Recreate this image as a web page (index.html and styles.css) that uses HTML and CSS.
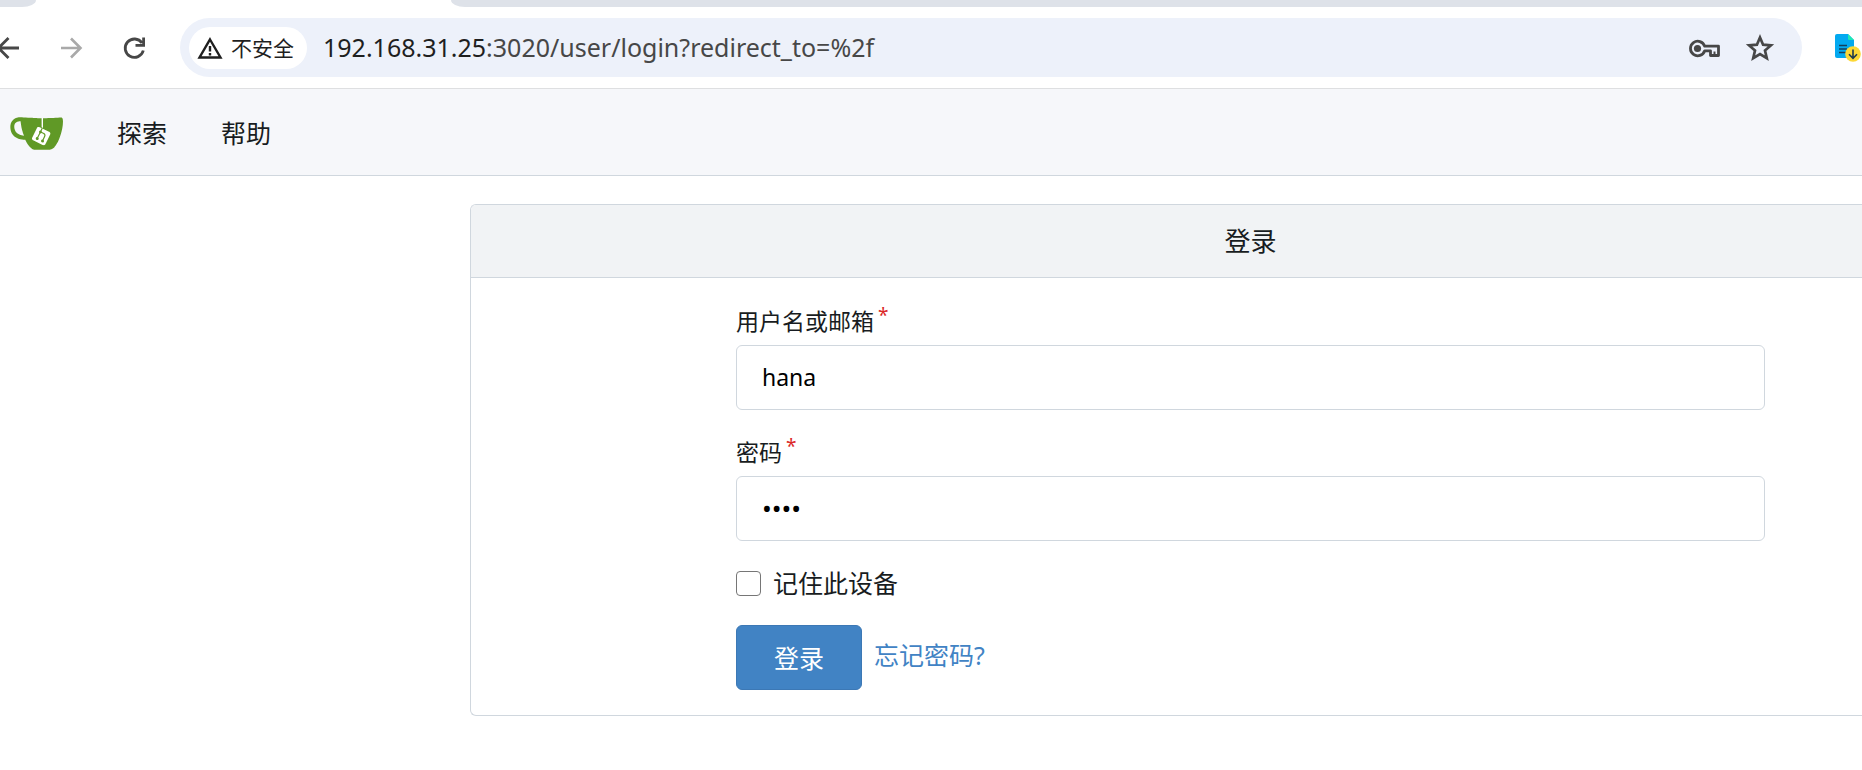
FILE: index.html
```html
<!DOCTYPE html>
<html lang="zh-CN">
<head>
<meta charset="utf-8">
<title>登录 - Gitea</title>
<link rel="stylesheet" href="styles.css">
</head>
<body>
<header class="browser">
  <div class="tabs">
    <div class="tab-prev"></div>
    <div class="tab-active"></div>
    <div class="tab-rest"></div>
  </div>
  <div class="toolbar">
    <button class="tool" type="button" aria-label="后退">
      <svg width="36" height="36" viewBox="0 0 36 36" fill="none" stroke="#474747" stroke-width="2.800"><path d="M29 18H9M18.500 8L8.500 18L18.500 28"/></svg>
    </button>
    <button class="tool" type="button" aria-label="前进">
      <svg width="36" height="36" viewBox="0 0 36 36" fill="none" stroke="#a9a9a9" stroke-width="2.600"><path d="M8 18H27M18 8.500L27.500 18L18 27.500"/></svg>
    </button>
    <button class="tool" type="button" aria-label="刷新">
      <svg width="36" height="36" viewBox="0 0 36 36" fill="none" stroke="#474747" stroke-width="2.800"><path d="M26 13A9.200 9.200 0 1 0 27.300 20.500M27.600 7.500V15.400H19.500"/></svg>
    </button>
    <div class="address">
      <button class="security" type="button">
        <svg width="26" height="24" viewBox="0 0 26 24"><path d="M13 3.500L23.500 21.500H2.500Z" fill="none" stroke="#1f1f1f" stroke-width="2.400"/><path d="M11.800 10h2.400v5.600h-2.400zM11.800 17h2.400v2.400h-2.400z" fill="#1f1f1f"/></svg>
        <span>不安全</span>
      </button>
      <div class="url"><span class="host">192.168.31.25</span>:3020/user/login?redirect_to=%2f</div>
      <button class="tool" type="button" aria-label="密码">
        <svg width="36" height="36" viewBox="0 0 36 36" fill="none" stroke="#474747"><path d="M18.700 16.200A7.300 7.300 0 1 0 18.700 20.800H24.500V25.500H32.500V16.200Z" stroke-width="2.800" stroke-linejoin="round"/><circle cx="11.500" cy="18.500" r="3.600" fill="#474747" stroke="none"/><path d="M28.500 21.500V25.500" stroke-width="2"/></svg>
      </button>
      <button class="tool" type="button" aria-label="收藏">
        <svg width="36" height="36" viewBox="0 0 36 36" fill="none" stroke="#474747" stroke-width="2.700"><path d="M18 7.500L21.100 14.700L28.900 15.400L23 20.500L24.800 28.200L18 24.100L11.200 28.200L13 20.500L7.100 15.400L14.900 14.700Z"/></svg>
      </button>
    </div>
    <button class="extension" type="button" aria-label="扩展程序">
      <svg width="28" height="32" viewBox="0 0 28 32"><path d="M3 2H14L20 8V24a2 2 0 0 1-2 2H3a2 2 0 0 1-2-2V4a2 2 0 0 1 2-2Z" fill="#03a9f0"/><path d="M14 2L20 8H15a1 1 0 0 1-1-1Z" fill="#1de9b6"/><path d="M5 13.500H13M5 17H13M5 20.500H13" stroke="#13405c" stroke-width="1.500"/><circle cx="19" cy="22" r="7.800" fill="#fdd835"/><path d="M19 17.500V26M15 22.300L19 26.300L23 22.300" fill="none" stroke="#1f3a4d" stroke-width="1.600"/></svg>
    </button>
  </div>
</header>

<nav class="navbar">
  <a class="logo" href="#" aria-label="首页">
    <svg width="53" height="33" viewBox="2 140 632 394"><path fill="#fff" d="M395.900 484.200l-126.900-61c-12.500-6-17.900-21.200-11.800-33.800l61-126.900c6-12.500 21.200-17.900 33.800-11.800 17.200 8.300 27.100 13 27.100 13l-.1-109.200 16.700-.1.1 117.100s57.400 24.200 83.100 40.100c3.700 2.300 10.200 6.800 12.900 14.400 2.100 6.100 2 13.100-1 19.300l-61 126.900c-6.200 12.700-21.400 18.100-33.900 12z"/><path fill="#609926" fill-rule="evenodd" d="M622.700 149.800c-4.100-4.100-9.600-4-9.600-4s-117.200 6.600-177.900 8c-13.300.3-26.500.6-39.600.7v117.200c-5.500-2.600-11.100-5.300-16.600-7.900 0-36.400-.1-109.200-.1-109.200-29 .4-89.200-2.200-89.200-2.200s-141.400-7.100-156.800-8.500c-9.800-.6-22.500-2.100-39 1.500-8.700 1.800-33.500 7.400-53.800 26.900C-4.900 212.400 6.600 276.200 8 285.800c1.700 11.700 6.900 44.200 31.700 72.500 45.800 56.100 144.400 54.800 144.400 54.800s12.100 28.900 30.600 55.500c25 33.100 50.700 58.900 75.700 62 63 0 188.900-.1 188.900-.1s12 .1 28.300-10.300c14-8.500 26.500-23.400 26.500-23.400s12.900-13.800 30.900-45.300c5.500-9.700 10.100-19.100 14.100-28 0 0 55.200-117.100 55.200-231.100-1.100-34.500-9.600-40.600-11.600-42.600zM125.600 353.900c-25.900-8.500-36.900-18.700-36.900-18.700S69.600 321.800 60 295.400c-16.500-44.200-1.400-71.200-1.400-71.200s8.400-22.500 38.500-30c13.800-3.700 31-3.100 31-3.100s7.100 59.400 15.700 94.200c7.200 29.200 24.800 77.700 24.800 77.700s-26.100-3.100-43-9.100zM425.900 461.500s-6.100 14.500-19.600 15.400c-5.800.4-10.300-1.200-10.300-1.200s-.3-.1-5.300-2.100l-112.900-55s-10.900-5.700-12.800-15.600c-2.200-8.100 2.700-18.100 2.700-18.100L322 273s4.800-9.700 12.200-13c.6-.3 2.300-1 4.500-1.500 8.100-2.100 18 2.800 18 2.800l110.700 53.700s12.600 5.700 15.300 16.200c1.900 7.400-.5 14-1.800 17.200-6.300 15.400-55 113.100-55 113.100z"/><path fill="#609926" d="M326.800 380.100c-8.200.1-15.400 5.800-17.300 13.800-1.900 8 2 16.300 9.100 20 7.700 4 17.500 1.800 22.700-5.400 5.100-7.100 4.300-16.900-1.800-23.100l24-49.100c1.500.1 3.700.2 6.200-.5 4.100-.9 7.100-3.600 7.100-3.600 4.200 1.800 8.600 3.800 13.200 6.100 4.800 2.400 9.300 4.900 13.400 7.300.9.500 1.800 1.100 2.800 1.900 1.600 1.300 3.400 3.100 4.700 5.500 1.900 5.500-1.900 14.900-1.900 14.900-2.300 7.600-18.400 40.600-18.400 40.600-8.100-.2-15.300 5-17.700 12.500-2.600 8.100 1.100 17.300 8.900 21.300 7.800 4 17.400 1.700 22.500-5.300 5-6.800 4.600-16.300-1.100-22.600 1.900-3.700 3.700-7.400 5.600-11.300 5-10.400 13.500-30.400 13.500-30.400.9-1.700 5.700-10.300 2.700-21.300-2.500-11.400-12.600-16.700-12.600-16.700-12.200-7.900-29.200-15.200-29.200-15.200s0-4.100-1.100-7.100c-1.100-3.100-2.800-5.100-3.900-6.300 4.700-9.700 9.400-19.300 14.100-29-4.100-2-8.100-4-12.200-6.100-4.800 9.800-9.700 19.700-14.500 29.500-6.700-.1-12.900 3.500-16.100 9.400-3.400 6.300-2.700 14.100 1.900 19.800z"/></svg>
  </a>
  <a class="nav-link" href="#">探索</a>
  <a class="nav-link" href="#">帮助</a>
</nav>

<main class="page">
  <section class="card">
    <h1 class="card-title">登录</h1>
    <form class="login">
      <div class="field">
        <label class="label" for="user">用户名或邮箱<span class="required">*</span></label>
        <input class="input" id="user" type="text" value="hana">
      </div>
      <div class="field">
        <label class="label" for="password">密码<span class="required">*</span></label>
        <input class="input input-password" id="password" type="password" value="hana">
      </div>
      <div class="remember">
        <input class="checkbox" id="remember" type="checkbox">
        <label for="remember">记住此设备</label>
      </div>
      <div class="actions">
        <button class="submit" type="submit">登录</button>
        <a class="forgot" href="#">忘记密码?</a>
      </div>
    </form>
  </section>
</main>
</body>
</html>
```

FILE: styles.css
```css
* {
  box-sizing: border-box;
}

body {
  margin: 0;
  background: #fff;
  color: #181c21;
  font-family: "Noto Sans", "Noto Sans CJK SC", sans-serif;
  font-size: 25px;
  line-height: 32px;
}

button,
input {
  font: inherit;
}

a {
  color: inherit;
  text-decoration: none;
}

svg {
  display: block;
}

/* Browser chrome */
.browser {
  overflow: hidden;
  border-bottom: 1px solid #dedfe1;
}

.tabs {
  display: flex;
  height: 7px;
}

.tab-prev,
.tab-rest {
  background: #dee2e9;
}

.tab-prev {
  width: 36px;
  border-bottom-right-radius: 16px 8px;
}

.tab-active {
  width: 415px;
}

.tab-rest {
  flex: 1;
  border-bottom-left-radius: 16px 8px;
}

.toolbar {
  display: flex;
  align-items: center;
  gap: 27px;
  margin-left: -10px;
  padding: 11px 0;
}

.tool,
.extension {
  flex: none;
  padding: 0;
  border: 0;
  background: none;
}

.extension {
  margin-left: 5px;
}

.address {
  display: flex;
  flex: 1;
  align-items: center;
  min-width: 0;
  height: 59px;
  margin-left: 1px;
  padding: 0 24px 0 9px;
  border-radius: 30px;
  background: #edf1fa;
}

.address .tool + .tool {
  margin-left: 20px;
}

.security {
  display: flex;
  flex: none;
  align-items: center;
  gap: 8px;
  height: 42px;
  padding: 0 13px 0 8px;
  border: 0;
  border-radius: 21px;
  background: #fff;
  color: #1f1f1f;
  font-size: 21px;
}

.url {
  flex: 1;
  padding: 0 0 2px 16px;
  color: #474747;
  white-space: nowrap;
}

.host {
  color: #1f1f1f;
}

/* Site navigation */
.navbar {
  display: flex;
  align-items: center;
  height: 87px;
  padding: 2px 0 0 10px;
  border-bottom: 1px solid #d0d7de;
  background: #f6f7fa;
}

.nav-link {
  margin-left: 54px;
}

/* Login card */
.page {
  padding: 28px 0 54px 470px;
}

.card {
  border: 1px solid #d0d7de;
  border-right: 0;
  border-radius: 6px 0 0 6px;
}

.card-title {
  margin: 0;
  padding: 20px 0 20px 168px;
  border-bottom: 1px solid #d0d7de;
  border-radius: 5px 0 0 0;
  background: #f1f3f5;
  font-size: 26px;
  font-weight: 400;
  text-align: center;
}

.login {
  display: flex;
  flex-direction: column;
  gap: 26px;
  padding: 27px 97px 25px 265px;
}

.field {
  display: flex;
  flex-direction: column;
  gap: 8px;
}

.label {
  font-size: 23px;
}

.required {
  margin-left: 4px;
  color: #db2828;
  font-size: 19px;
  line-height: 0;
  vertical-align: 8px;
}

.input {
  width: 100%;
  height: 65px;
  padding: 0 25px 2px;
  border: 1px solid #d0d7de;
  border-radius: 6px;
  background: #fff;
  color: #000;
  font-size: 23px;
}

.input-password {
  font-size: 26px;
}

.remember {
  display: flex;
  align-items: center;
  gap: 12px;
}

.checkbox {
  width: 25px;
  height: 25px;
  margin: 0;
  border: 1px solid #767676;
  border-radius: 4px;
  background: #fff;
  appearance: none;
}

.checkbox:checked {
  background: #4183c4;
}

.actions {
  display: flex;
  align-items: center;
  gap: 12px;
}

.submit {
  height: 65px;
  padding: 0 37px;
  border: 1px solid #3c78b5;
  border-radius: 6px;
  background: #4183c4;
  color: #fff;
}

.forgot {
  padding-bottom: 5px;
  color: #4183c4;
}
```
